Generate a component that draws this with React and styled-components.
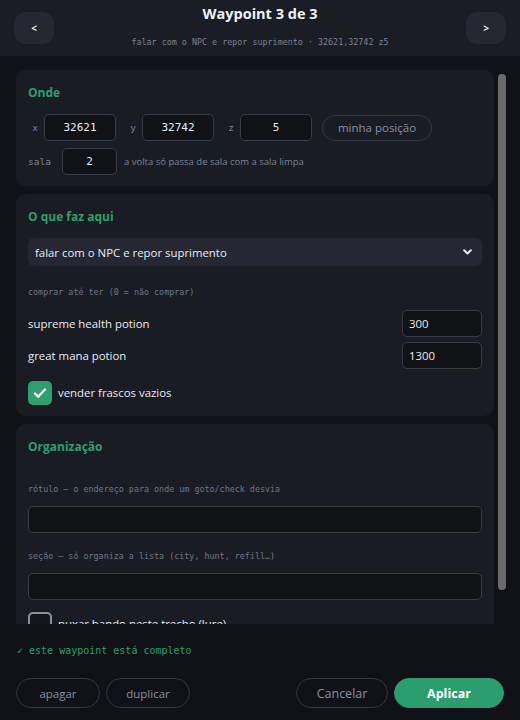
import React from "react";
import styled, { createGlobalStyle } from "styled-components";

const SANS = `"Open Sans", "Noto Sans", sans-serif`;
const MONO = `"DejaVu Sans Mono", "Liberation Mono", monospace`;

const Global = createGlobalStyle`
  html, body { margin: 0; padding: 0; background: #111217; }
  body { font-family: ${SANS}; color: #e6e9f0; }
  * { box-sizing: border-box; }
`;

const Dialog = styled.div`
  width: 520px;
  height: 720px;
  display: flex;
  flex-direction: column;
  background: #111217;
  overflow: hidden;
`;

const Header = styled.header`
  height: 56px;
  flex: none;
  background: #1a1d24;
  display: grid;
  grid-template-columns: 40px 1fr 40px;
  align-items: start;
  padding: 4px 14px 0;
`;

const NavButton = styled.button`
  margin-top: 8px;
  width: 40px;
  height: 32px;
  border: none;
  border-radius: 12px;
  background: #252831;
  color: #e6e9f0;
  font-family: ${SANS};
  font-weight: 700;
  font-size: 10px;
  padding: 0;
  display: flex;
  align-items: center;
  justify-content: center;
`;

const TitleBlock = styled.div`
  display: flex;
  flex-direction: column;
  align-items: center;
`;

const Title = styled.h1`
  margin: 0;
  font-size: 14.5px;
  line-height: 20px;
  font-weight: 700;
  color: #eef1f7;
`;

const Subtitle = styled.div`
  margin-top: 12px;
  font-family: ${MONO};
  font-size: 8.4px;
  line-height: 12px;
  color: #7b8395;
  white-space: nowrap;
`;

const Main = styled.main`
  flex: 1;
  min-height: 0;
  display: flex;
  padding: 14px 14px 0 16px;
`;

const Scroller = styled.div`
  flex: 1;
  min-width: 0;
  overflow: hidden;
  padding-right: 4px;
  display: flex;
  flex-direction: column;
  gap: 8px;
`;

const ScrollTrack = styled.div`
  flex: none;
  width: 8px;
  padding-top: 4px;
`;

const ScrollThumb = styled.div`
  height: 516px;
  border-radius: 4px;
  background: #6a6a6a;
`;

const Card = styled.section`
  flex: none;
  background: #1a1c23;
  border-radius: 10px;
  padding: 15px 12px 11px;
  display: flex;
  flex-direction: column;
`;

const CardTitle = styled.h2`
  margin: 0 0 13px;
  font-size: 12px;
  line-height: 16px;
  font-weight: 700;
  color: #2f9f6d;
`;

const Row = styled.div`
  display: flex;
  align-items: center;
  gap: ${(p) => p.$gap ?? 10}px;
  margin-top: ${(p) => p.$mt ?? 0}px;
`;

const Group = styled.div`
  display: flex;
  align-items: center;
  gap: ${(p) => p.$gap ?? 2}px;
`;

const AxisLabel = styled.span`
  width: ${(p) => p.$w ?? 14}px;
  text-align: center;
  font-family: ${MONO};
  font-size: 9.5px;
  color: #7b8395;
`;

const TextInput = styled.input`
  display: block;
  width: ${(p) => (p.$w ? `${p.$w}px` : "100%")};
  height: ${(p) => p.$h ?? 27}px;
  background: #111216;
  border: 1px solid #393c46;
  border-radius: 5px;
  color: #e8ecf4;
  font-family: ${(p) => (p.$mono ? MONO : SANS)};
  font-size: ${(p) => (p.$mono ? 11 : 11.4)}px;
  text-align: ${(p) => (p.$mono ? "center" : "left")};
  padding: 0 6px;
  outline: none;
`;

const PillButton = styled.button`
  height: ${(p) => p.$h ?? 30}px;
  width: ${(p) => p.$w}px;
  border-radius: 15px;
  border: 1px solid ${(p) => (p.$primary ? "#2b9d6f" : "#353842")};
  background: ${(p) => (p.$primary ? "#2b9d6f" : "transparent")};
  color: ${(p) => (p.$primary ? "#ffffff" : "#8790a3")};
  font-family: ${SANS};
  font-size: ${(p) => p.$fs ?? 11.5}px;
  font-weight: ${(p) => (p.$primary ? 700 : 400)};
  padding: 0;
`;

const Hint = styled.span`
  font-size: 9.5px;
  color: #7b8395;
  white-space: nowrap;
`;

const Select = styled.div`
  height: 28px;
  border-radius: 6px;
  background: #252832;
  display: flex;
  align-items: center;
  justify-content: space-between;
  padding: 0 10px 0 7px;
  font-size: 11.4px;
  color: #e8ecf4;
`;

const MonoLabel = styled.div`
  font-family: ${MONO};
  font-size: 8.4px;
  line-height: 12px;
  color: #6e7688;
  margin-top: ${(p) => p.$mt ?? 0}px;
  margin-bottom: ${(p) => p.$mb ?? 0}px;
  white-space: nowrap;
`;

const ItemRow = styled.div`
  display: flex;
  align-items: center;
  justify-content: space-between;
  margin-top: ${(p) => p.$mt ?? 0}px;
  font-size: 11.4px;
  color: #e8ecf4;
`;

const CheckRow = styled.label`
  display: flex;
  align-items: center;
  gap: 6px;
  margin-top: 12px;
  font-size: 11.4px;
  line-height: 16px;
  color: #e8ecf4;
  white-space: nowrap;
`;

const CheckBox = styled.span`
  width: 24px;
  height: 24px;
  flex: none;
  border-radius: 5px;
  display: flex;
  align-items: center;
  justify-content: center;
  background: ${(p) => (p.$on ? "#2f9f6e" : "#15161b")};
  border: ${(p) => (p.$on ? "none" : "2.5px solid #8e9098")};
`;

const Footer = styled.footer`
  flex: none;
  padding: 20px 16px 12px;
  display: flex;
  flex-direction: column;
  gap: 20px;
`;

const Status = styled.div`
  font-family: ${MONO};
  font-size: 10px;
  line-height: 14px;
  color: #2f9f6d;
  padding-left: 1px;
  white-space: pre;
`;

const Actions = styled.div`
  display: flex;
  align-items: center;
  gap: 6px;
`;

const Spacer = styled.div`
  flex: 1;
`;

const Check = () => (
  <svg width="16" height="16" viewBox="0 0 16 16" fill="none">
    <path d="M3 8.5l3.2 3.2L13 4.5" stroke="#fff" strokeWidth="2.4" strokeLinecap="round" strokeLinejoin="round" />
  </svg>
);

const Chevron = () => (
  <svg width="9" height="6" viewBox="0 0 9 6" fill="none">
    <path d="M1.2 1.3L4.5 4.5 7.8 1.3" stroke="#e8ecf4" strokeWidth="2" strokeLinecap="round" strokeLinejoin="round" />
  </svg>
);

export default function App() {
  return (
    <>
      <Global />
      <Dialog>
        <Header>
          <NavButton>&lt;</NavButton>
          <TitleBlock>
            <Title>Waypoint 3 de 3</Title>
            <Subtitle>falar com o NPC e repor suprimento · 32621,32742 z5</Subtitle>
          </TitleBlock>
          <NavButton>&gt;</NavButton>
        </Header>
        <Main>
          <Scroller>
            <Card>
              <CardTitle>Onde</CardTitle>
              <Row>
                <Group>
                  <AxisLabel>x</AxisLabel>
                  <TextInput $mono $w={72} defaultValue="32621" />
                </Group>
                <Group>
                  <AxisLabel>y</AxisLabel>
                  <TextInput $mono $w={72} defaultValue="32742" />
                </Group>
                <Group>
                  <AxisLabel>z</AxisLabel>
                  <TextInput $mono $w={72} defaultValue="5" />
                </Group>
                <PillButton $w={110} $h={26} $fs={11.5}>minha posição</PillButton>
              </Row>
              <Row $mt={7} $gap={7}>
                <Group $gap={11}>
                  <AxisLabel $w={23}>sala</AxisLabel>
                  <TextInput $mono $w={55} defaultValue="2" />
                </Group>
                <Hint>a volta só passa de sala com a sala limpa</Hint>
              </Row>
            </Card>

            <Card>
              <CardTitle>O que faz aqui</CardTitle>
              <Select>
                <span>falar com o NPC e repor suprimento</span>
                <Chevron />
              </Select>
              <MonoLabel $mt={20} $mb={0}>comprar até ter (0 = não comprar)</MonoLabel>
              <ItemRow $mt={12}>
                <span>supreme health potion</span>
                <TextInput $w={80} $h={27} defaultValue="300" />
              </ItemRow>
              <ItemRow $mt={5}>
                <span>great mana potion</span>
                <TextInput $w={80} $h={27} defaultValue="1300" />
              </ItemRow>
              <CheckRow>
                <CheckBox $on>
                  <Check />
                </CheckBox>
                vender frascos vazios
              </CheckRow>
            </Card>

            <Card>
              <CardTitle>Organização</CardTitle>
              <MonoLabel $mt={15} $mb={11}>rótulo — o endereço para onde um goto/check desvia</MonoLabel>
              <TextInput />
              <MonoLabel $mt={17} $mb={11}>seção — só organiza a lista (city, hunt, refill…)</MonoLabel>
              <TextInput />
              <CheckRow>
                <CheckBox />
                puxar bando neste trecho (lure)
              </CheckRow>
            </Card>
          </Scroller>
          <ScrollTrack>
            <ScrollThumb />
          </ScrollTrack>
        </Main>
        <Footer>
          <Status>✓ este waypoint está completo</Status>
          <Actions>
            <PillButton $w={84}>apagar</PillButton>
            <PillButton $w={84}>duplicar</PillButton>
            <Spacer />
            <PillButton $w={92} $fs={12.5}>Cancelar</PillButton>
            <PillButton $w={110} $fs={12.5} $primary>Aplicar</PillButton>
          </Actions>
        </Footer>
      </Dialog>
    </>
  );
}
